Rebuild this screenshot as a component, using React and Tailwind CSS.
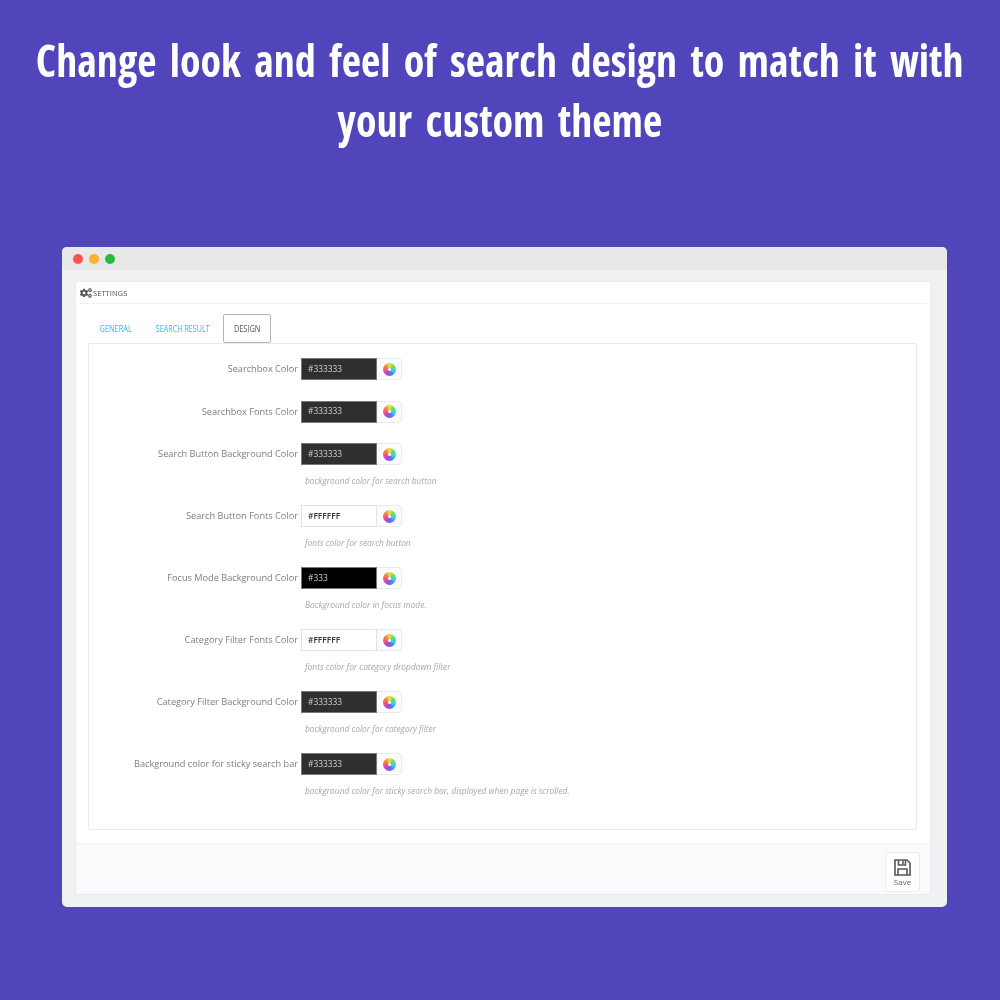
import { FaCogs } from "react-icons/fa";

const rows = [
  { label: "Searchbox Color", value: "#333333", dark: true },
  { label: "Searchbox Fonts Color", value: "#333333", dark: true },
  { label: "Search Button Background Color", value: "#333333", dark: true, help: "background color for search button" },
  { label: "Search Button Fonts Color", value: "#FFFFFF", help: "fonts color for search button" },
  { label: "Focus Mode Background Color", value: "#333", black: true, help: "Background color in focus mode." },
  { label: "Category Filter Fonts Color", value: "#FFFFFF", help: "fonts color for category dropdown filter" },
  { label: "Category Filter Background Color", value: "#333333", dark: true, help: "background color for category filter" },
  { label: "Background color for sticky search bar", value: "#333333", dark: true, help: "background color for sticky search bar, displayed when page is scrolled." },
];

function ColorRow({ label, value, dark, black, help }) {
  let inputClass = "bg-white text-[#333333] font-semibold border-[#dfe3e6]";
  if (dark) inputClass = "bg-[#2f2f2f] text-[#d0d0d0] border-[#777777]";
  if (black) inputClass = "bg-black text-[#d0d0d0] border-[#777777]";

  return (
    <div className={help ? "mb-[19px]" : "mb-[20.5px]"}>
      <div className="flex items-center h-[22px]">
        <div className="w-[209px] text-right text-[9.2px] text-[#7d7d7d] whitespace-nowrap">{label}</div>
        <div className={"ml-[3px] w-[76px] h-[22px] border pl-[6px] flex items-center text-[8.4px] " + inputClass}>{value}</div>
        <div className="w-[25px] h-[22px] bg-[#fafbfc] border border-l-0 border-[#e9ecee] rounded-r-sm flex items-center justify-center">
          <div className="w-[13px] h-[13px] rounded-full bg-[conic-gradient(#e8e040,#5fdc70,#3fd0e8,#4f7cf0,#b040e0,#f04f8a,#f5803d,#e8e040)] flex items-center justify-center">
            <div className="w-[3px] h-[3px] rounded-full bg-white" />
          </div>
        </div>
      </div>
      {help && (
        <div className="ml-[216px] mt-[11px] h-[10px] leading-[10px] text-[8.4px] italic text-[#a8a8a8] whitespace-nowrap">{help}</div>
      )}
    </div>
  );
}

export default function App() {
  return (
    <div className="w-[1000px] h-[1000px] bg-[#5045bb] overflow-hidden font-['Open_Sans',sans-serif]">
      {/* Heading */}
      <h1 className="h-[247px] pt-[30px] flex flex-col items-center text-white text-[44px] leading-[60px] font-bold font-stretch-condensed whitespace-nowrap [word-spacing:6px]">
        <span className="scale-x-[0.957]">Change look and feel of search design to match it with</span>
        <span className="scale-x-[0.957]">your custom theme</span>
      </h1>

      {/* Browser window */}
      <div className="ml-[62px] w-[885px] h-[660px] rounded-[5px] bg-[#eff1f3] overflow-hidden blur-[0.5px] flex flex-col">
        <div className="h-[23px] shrink-0 bg-[#e8e8e8] flex items-center gap-[6px] pl-[11px]">
          <span className="w-[10px] h-[10px] rounded-full bg-[#fc5350]" />
          <span className="w-[10px] h-[10px] rounded-full bg-[#fdb02c]" />
          <span className="w-[10px] h-[10px] rounded-full bg-[#27b941]" />
        </div>

        <div className="mt-[11px] ml-[13px] w-[856px] h-[614px] bg-white border border-[#e8ebed] rounded-[2px] flex flex-col">
          <div className="h-[22px] shrink-0 mx-[3px] border-b border-[#f0f1f2] flex items-center gap-[1px] pl-[1px] text-[8px] text-[#555555]">
            <FaCogs size={12} className="text-[#555555]" />
            <span className="scale-x-[0.95] origin-left">SETTINGS</span>
          </div>

          {/* Tabs */}
          <div className="h-[39px] shrink-0 flex items-end pl-[12px] text-[9px]">
            <div className="w-[55px] h-[29px] flex items-center justify-center text-[#38b6e6]">
              <span className="scale-x-[0.82]">GENERAL</span>
            </div>
            <div className="w-[80px] h-[29px] flex items-center justify-center whitespace-nowrap text-[#38b6e6]">
              <span className="scale-x-[0.8]">SEARCH RESULT</span>
            </div>
            <div className="w-[48px] h-[29px] bg-white border border-[#b5b5b5] rounded-[2px] flex items-center justify-center text-[#555555]">
              <span className="scale-x-[0.82]">DESIGN</span>
            </div>
          </div>

          {/* Tab pane */}
          <div className="ml-[12px] w-[829px] h-[487px] shrink-0 border border-[#e8ebed] rounded-[2px] pt-[14px]">
            {rows.map((row) => (
              <ColorRow key={row.label} {...row} />
            ))}
          </div>

          {/* Footer */}
          <div className="mt-[13px] flex-1 bg-[#fafbfc] border-t border-[#f1f3f4] flex justify-end pt-[8px] pr-[10px]">
            <div className="w-[35px] h-[40px] bg-white border border-[#e9ecee] rounded-[3px] flex flex-col items-center pt-[5px]">
              <svg width="19" height="19" viewBox="0 0 19 19" fill="none" stroke="#555555" strokeWidth="1.6">
                <path d="M2 2h12l3 3v12H2z" />
                <path d="M5.5 2v5h7V2" />
                <path d="M10 3v3" />
                <path d="M5 17v-6h9v6" />
              </svg>
              <span className="text-[8px] leading-[10px] text-[#666666]">Save</span>
            </div>
          </div>
        </div>
      </div>
    </div>
  );
}
